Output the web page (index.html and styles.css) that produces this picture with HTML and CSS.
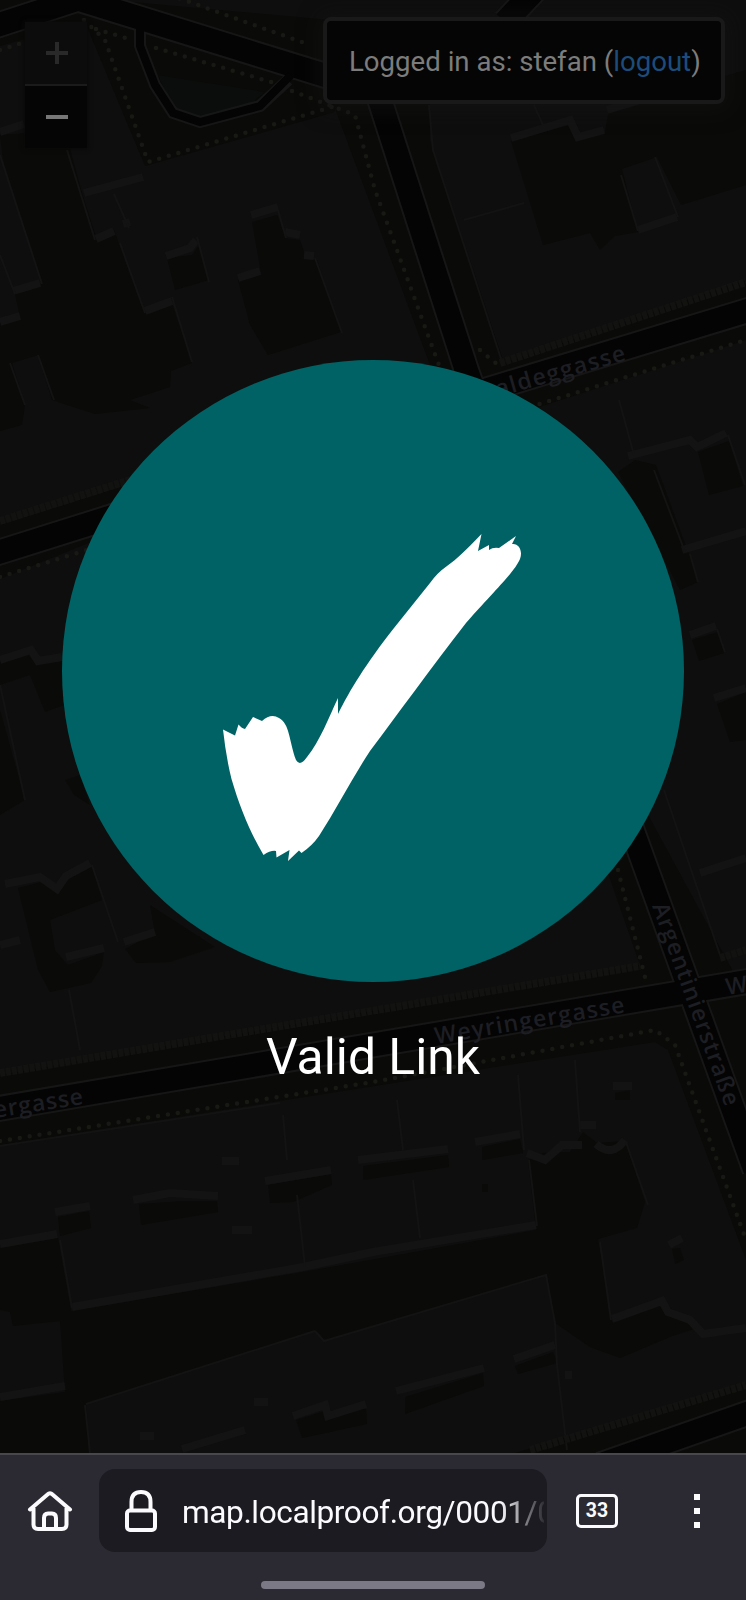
FILE: index.html
```html
<!DOCTYPE html>
<html lang="en">
<head>
<meta charset="utf-8">
<title>Valid Link</title>
<link rel="stylesheet" href="styles.css">
</head>
<body>
<div class="screen">
  <main class="view">
    <svg class="map" viewBox="0 0 746 1453" aria-hidden="true">
      <!-- street verges -->
      <g class="verge">
        <path d="M0 0H110L330 20 335 112 145 166 85 22 0 46Z"/>
        <path d="M330 95H430V140L504 363 746 280V340L530 410 640 800 735 975 746 970V1260L668 1050 655 1042 0 1145V1075L640 965 600 850 430 365Z"/>
        <path d="M0 525L130 484V526L0 579Z"/>
        <path d="M515 1453L746 1383V1453Z"/>
      </g>
      <!-- courtyards -->
      <g class="yard">
        <path d="M0 135L65 130 82 193 97 240 114 230 144 312 172 303 192 363 171 371 170 387 130 400 150 408 95 414 58 402 52 400 38 355 12 363 25 405 22 425 0 431V323L20 317 15 294 42 284 3 160Z"/>
        <path d="M167 258L192 255 199 245 209 280 175 290Z"/>
        <path d="M252 222L277 215 286 238 300 240 306 257 317 260 341 332 268 355 250 325 238 280 261 273Z"/>
        <path d="M511 141L570 125 577 140 605 132 609 109 746 70V185L681 205 657 157 622 169 638 232 615 236 600 250 590 233 543 245Z"/>
        <path d="M618 472L635 460 656 465 689 554 698 582 680 590Z"/>
        <path d="M698 452L729 441 743 486 709 495Z"/>
        <path d="M692 640L718 632 724 653 699 661ZM717 704L746 692V740L730 742Z"/>
        <path d="M0 662L32 653 40 664 62 661 64 705 45 712 30 675 0 685ZM0 710L25 800 0 815ZM65 780L80 775 90 805 74 795Z"/>
        <path d="M18 888L45 881 57 891 67 880 92 867 102 900 50 920 55 950 68 965 104 952 102 966 91 983 50 992 38 970Z"/>
        <path d="M125 949L155 933 150 905 215 947 170 962 136 963Z"/>
        <path d="M0 1248L58 1238 71 1311 303 1272 536 1230 528 1160 543 1153 570 1152 583 1132 597 1143 625 1141 645 1202 637 1228 598 1239 612 1322 661 1302 700 1327 670 1337 620 1358 590 1347 555 1323 547 1275 324 1341 315 1331 86 1404 90 1453H0V1401L65 1392 60 1321 13 1326 10 1312 0 1310Z"/>
        <path d="M58 1217L89 1211 91 1228 60 1236ZM139 1204L185 1201 217 1201 218 1212 141 1225ZM268 1185L331 1174 332 1185 293 1202 270 1203ZM363 1166L448 1155 449 1167 363 1180ZM482 1147L520 1139 523 1153 482 1160ZM296 1420L325 1411 366 1409 367 1424 302 1438ZM405 1397L483 1373 484 1386 405 1414ZM515 1366L553 1352 557 1363 518 1374ZM672 1249L680 1248 684 1260 675 1264ZM482 1184H488V1192H482ZM615 1093L630 1090V1100H615Z"/>
      </g>
      <path class="park" d="M158 75L265 92 245 108 200 117 173 108Z"/>
      <!-- lit walls -->
      <g class="wall">
        <path d="M0 132L24 124M84 193L143 177M96 239L114 231M123 224L130 222M166 256L190 248 196 240M145 311L172 301M251 215L278 207M285 232L300 235M304 255L314 256M238 278L260 271M13 291L40 283M0 322L20 316"/>
        <path d="M511 138L570 120 578 137 604 130M607 110L640 100M638 230L677 217M628 456L690 440 697 447 726 433M682 550L746 531M690 635L716 626M714 698L746 688M700 873L746 858"/>
        <path d="M5 884L40 877 57 889 66 876 90 863M66 957L104 948M0 945L20 940M124 942L155 932M0 660L31 650 38 661 62 657"/>
        <path d="M0 1244L57 1234M55 1212L90 1206M133 1200L170 1193 218 1196M265 1181L331 1170M358 1160L448 1149M475 1142L520 1134M72 1307L303 1267 373 1252 536 1225M0 1397L65 1386M222 1161H239M232 1230H252M254 1402H268M140 1436H154M182 1449L245 1430M293 1416L325 1405 328 1416 366 1404M396 1391L484 1368M514 1359L555 1345M612 1319L662 1301 668 1312 690 1320 703 1334 746 1328M527 1153L545 1160 562 1145 582 1145M580 1125H596M596 1144Q612 1158 625 1140M669 1245L682 1238M613 1086H632M565 1375H572"/>
      </g>
      <g class="edge">
        <path d="M67 150L95 240M114 194L129 228M120 243L145 313M172 297L192 362M197 237L209 282M315 258L342 333M278 210L286 238M0 155L42 284M0 255L15 294M10 363L25 405M38 355L54 400"/>
        <path d="M429 105L433 150 503 365M464 220L524 203M621 175L638 231M655 157L678 217M534 105L543 125M619 400L634 455M654 470L685 552M728 435L745 485M690 554L698 582M717 629L725 652M664 790L720 955"/>
        <path d="M0 685L25 800M92 865L118 942M69 990L80 1050M283 1115L287 1160M297 1195L305 1267M397 1100L403 1150M413 1180L420 1238M518 1075L524 1150M575 1060L580 1132M529 1160L537 1226M626 1142L648 1205M600 1242L611 1320M60 1240L72 1308M85 1405L90 1453M315 1331L324 1341 546 1275 555 1323 557 1365 567 1450M0 1146L280 1103M86 1404L315 1331"/>
      </g>
      <!-- roads: casing, then surface -->
      <g class="casing">
        <path d="M-5 26L78 -1 340 80"/>
        <path d="M505 22L535 -10M375 85L467 372 635 838 755 1170"/>
        <path d="M470 395L756 308M-10 555L130 511M-10 1110L373 1045 756 980M600 1465L760 1409"/>
      </g>
      <path class="casing lane" d="M140 28L140 46 155 85 173 113 200 122 260 106 288 80"/>
      <g class="road">
        <path d="M-5 26L78 -1 340 80"/>
        <path d="M505 22L535 -10M375 85L467 372 635 838 755 1170"/>
        <path d="M470 395L756 308M-10 555L130 511M-10 1110L373 1045 756 980M600 1465L760 1409"/>
      </g>
      <path class="road lane" d="M140 26L140 46 155 85 173 113 200 122 260 106 291 75"/>
      <!-- tree rows -->
      <g class="trees">
        <path d="M0 50L22 43M84 20L105 40 148 162 335 106M96 29L132 40M156 48L278 84M292 91L355 115 375 190 440 368M170 -5L310 45"/>
        <path d="M530 407L746 340M0 577L100 546M0 1141L373 1082 655 1030 675 1045 746 1240M618 870L647 985M480 350L498 365"/>
      </g>
      <g class="hedge">
        <path d="M500 363L746 282M0 521L130 480M0 1073L640 966M530 1450L746 1385M720 958L746 950"/>
      </g>
      <g class="street">
        <text textLength="134" transform="translate(498 397) rotate(-16)">aldeggasse</text>
        <text textLength="192" transform="translate(436 1044) rotate(-9.5)">Weyringergasse</text>
        <text textLength="90" transform="translate(-5 1118) rotate(-9)">ergasse</text>
        <text transform="translate(727 995) rotate(-9)">Weyringergasse</text>
        <text textLength="214" transform="translate(652 906) rotate(70)">Argentinierstraße</text>
      </g>
    </svg>

    <div class="controls">
      <div class="zoom">
        <div class="zoom-button zoom-off"><svg viewBox="0 0 22 22"><path d="M0 11H22M11 0V22"/></svg></div>
        <div class="zoom-button"><svg viewBox="0 0 22 22"><path d="M0 11H22"/></svg></div>
      </div>
      <div class="account">Logged in as: stefan (<a class="logout">logout</a>)</div>
    </div>

    <section class="result">
      <svg class="badge" viewBox="62 360 622 622">
        <circle class="disc" cx="373" cy="671" r="311"/>
        <path class="tick" d="M223 729.500L235 735.500 238.500 724.500Q242 728.500 245 729L253 717 262 721Q271 713 279 718C290 724 289 741 296 760Q300 767 307 757C320 741 329 717 338 698V714C350 690 365 665 394 628L430 583Q437 573 447 566C457 559 465 551 481.500 534L478 551 489 545V550Q493 547 499 548L516 536 512 544C519 543 523 551 520 559C514 572 501 584 466 623C430 669 398 714 370 751C351 780 337 808 319 836Q312 846 301.500 853L299 850.500 288 861 289.500 850 276.500 857.500 276 851 Q271 850 263.500 855C250 832 240 808 231.500 779Q226 757 223 729.500Z"/>
      </svg>
      <h1 class="title">Valid Link</h1>
    </section>
  </main>

  <footer class="browser">
    <div class="toolbar">
      <svg class="icon home" viewBox="0 0 46 42"><path d="M3 19.500L20.500 4.500Q23 2 25.500 4.500L43 19.500M6.500 18V34.500Q6.500 39 11 39H35Q39.500 39 39.500 34.500V18M17 39V28Q17 23.500 21 23.500H25Q29 23.500 29 28V39"/></svg>
      <div class="address">
        <svg class="icon lock" viewBox="0 0 32 42"><path d="M6.500 20V12Q6.500 2 16 2T25.500 12V20"/><rect x="2" y="20.500" width="28" height="19.500" rx="3"/></svg>
        <span class="url">map.localproof.org/0001/0</span>
      </div>
      <div class="tabs">33</div>
      <div class="menu"><i class="dot"></i><i class="dot"></i><i class="dot"></i></div>
    </div>
    <div class="handle"></div>
  </footer>
</div>
</body>
</html>
```
FILE: styles.css
```css
body {
  margin: 0;
  background: #0e0e0e;
  font-family: Roboto, sans-serif;
}

.screen {
  display: flex;
  flex-direction: column;
  width: 746px;
  height: 1600px;
  overflow: hidden;
}

.view {
  position: relative;
  flex: none;
  height: 1453px;
  overflow: hidden;
}

.map {
  position: absolute;
  inset: 0;
  width: 746px;
  height: 1453px;
  fill: none;
}

.verge, .yard { fill: #0a0a08; }
.park { fill: #0a0d0c; }
.wall { stroke: #131313; stroke-width: 8; }
.edge { stroke: #131313; stroke-width: 2; }
.casing { stroke: #161616; stroke-width: 27; }
.road { stroke: #040404; stroke-width: 23; }
.casing.lane { stroke-width: 12; }
.road.lane { stroke-width: 8; }

.trees {
  stroke: #181815;
  stroke-width: 4.500;
  stroke-linecap: round;
  stroke-dasharray: 0 10;
}

.hedge { stroke: #121210; stroke-width: 8; stroke-dasharray: 5 1; }

.street {
  fill: #1d1e23;
  font: 600 23px "Open Sans", sans-serif;
}

.controls {
  position: relative;
  display: flex;
  justify-content: space-between;
  align-items: flex-start;
  padding: 17px 21px 0 25px;
}

.zoom {
  display: flex;
  flex-direction: column;
  margin-top: 5px;
  width: 62px;
  box-shadow: 0 0 4px 1px #090909;
}

.zoom-button {
  display: flex;
  align-items: center;
  justify-content: center;
  height: 62px;
  background: #050505;
}

.zoom-button svg {
  width: 22px;
  height: 22px;
  margin-left: 2px;
  stroke: #777;
  stroke-width: 4;
}

.zoom-off {
  background: #0c0c0c;
  border-bottom: 2px solid #1b1b1b;
}

.zoom-off svg { stroke: #292929; }

.account {
  box-sizing: border-box;
  width: 402px;
  height: 87px;
  padding-left: 22px;
  border: 4px solid #191919;
  border-radius: 8px;
  background: #050505;
  box-shadow: 0 2px 20px 5px rgba(20, 20, 20, .5);
  color: #7c7c7c;
  font-size: 27.600px;
  line-height: 82px;
  white-space: nowrap;
}

.logout { color: #1c4c7b; }

.result {
  position: absolute;
  inset: 360px 0 auto;
  display: flex;
  flex-direction: column;
  align-items: center;
}

.badge { width: 622px; height: 622px; }
.disc { fill: #006264; }
.tick { fill: #fff; }

.title {
  margin: 45px 0 0;
  color: #fff;
  font-size: 49.800px;
  font-weight: 400;
  line-height: 60px;
}

.browser {
  box-sizing: border-box;
  flex: none;
  height: 147px;
  border-top: 2px solid #48474d;
  background: #2b2a33;
}

.toolbar {
  display: flex;
  align-items: center;
  height: 83px;
  padding: 14px 0 0 27px;
}

.icon {
  flex: none;
  fill: none;
  stroke: #fbfbfe;
  stroke-width: 4;
  stroke-linecap: round;
  stroke-linejoin: round;
}

.home { width: 46px; height: 42px; }
.lock { width: 32px; height: 42px; }

.address {
  box-sizing: border-box;
  display: flex;
  align-items: center;
  gap: 25px;
  width: 448px;
  height: 83px;
  margin-left: 26px;
  padding-left: 26px;
  border-radius: 16px;
  background: #1c1b22;
}

.url {
  width: 362px;
  margin-top: 4px;
  overflow: hidden;
  color: #fbfbfe;
  font-size: 31.600px;
  letter-spacing: -.4px;
  line-height: 40px;
  white-space: nowrap;
  -webkit-mask-image: linear-gradient(90deg, #000 318px, transparent 366px);
  mask-image: linear-gradient(90deg, #000 318px, transparent 366px);
}

.tabs {
  box-sizing: border-box;
  width: 42px;
  height: 34px;
  margin-left: 29px;
  border: 3px solid #fbfbfe;
  border-radius: 5px;
  color: #fbfbfe;
  font-size: 19.500px;
  font-weight: 700;
  line-height: 27px;
  text-align: center;
}

.menu {
  display: flex;
  flex-direction: column;
  gap: 8px;
  margin-left: 76px;
}

.dot {
  width: 6px;
  height: 6px;
  background: #fbfbfe;
}

.handle {
  width: 224px;
  height: 8px;
  margin: 29px auto 0;
  border-radius: 4px;
  background: #7c7986;
}
```
